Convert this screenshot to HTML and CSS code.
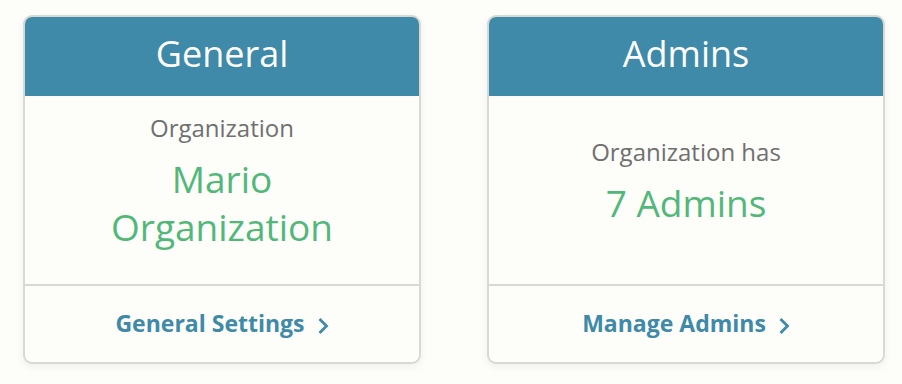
FILE: index.html
```html
<!DOCTYPE html>
<html lang="en">
<head>
    <meta charset="UTF-8">
    <meta name="viewport" content="width=device-width, initial-scale=1.0">
    <title>Organization</title>
    <link rel="stylesheet" href="styles.css">
</head>
<body>
    <div class="cards">
        <div class="card">
            <div class="card-header">General</div>
            <div class="card-body">
                <p class="label">Organization</p>
                <p class="value">Mario<br>Organization</p>
            </div>
            <a class="card-footer" href="#">
                General Settings
                <svg class="chevron" width="12" height="18" viewBox="0 0 12 18"><path d="M2.5 2 L9.5 9 L2.5 16" fill="none" stroke="currentColor" stroke-width="2.8"/></svg>
            </a>
        </div><!-- card -->
        <div class="card">
            <div class="card-header">Admins</div>
            <div class="card-body">
                <p class="label">Organization has</p>
                <p class="value">7 Admins</p>
            </div>
            <a class="card-footer" href="#">
                Manage Admins
                <svg class="chevron" width="12" height="18" viewBox="0 0 12 18"><path d="M2.5 2 L9.5 9 L2.5 16" fill="none" stroke="currentColor" stroke-width="2.8"/></svg>
            </a>
        </div><!-- card -->
    </div>
</body>
</html>
```

FILE: styles.css
```css
* {
    box-sizing: border-box;
}
body {
    margin: 0;
    background: #fdfdf9;
    font-family: "Open Sans", "Noto Sans", sans-serif;
}
.cards {
    display: flex;
    gap: 66px;
    padding: 15px 23px;
}
.card {
    width: 398px;
    height: 349px;
    flex-shrink: 0;
    display: flex;
    flex-direction: column;
    border: 2px solid #d8d8d6;
    border-radius: 9px;
    background: #fdfdf9;
    box-shadow: 0 3px 8px rgba(0, 0, 0, 0.06);
    overflow: hidden;
}
.card-header {
    height: 79px;
    flex-shrink: 0;
    background: #3e8aa8;
    color: #fff;
    font-size: 36px;
    display: flex;
    align-items: center;
    justify-content: center;
    padding-bottom: 7px;
}
.card-body {
    flex: 1;
    display: flex;
    flex-direction: column;
    align-items: center;
    justify-content: center;
    text-align: center;
    border-bottom: 2px solid #d8d8d6;
    padding-bottom: 16px;
}
.label {
    margin: 0;
    color: #707070;
    font-size: 24px;
    line-height: 30px;
}
.value {
    margin: 12px 0 0;
    color: #52b87a;
    font-size: 37px;
    line-height: 48px;
}
.card-footer {
    height: 76px;
    flex-shrink: 0;
    display: flex;
    align-items: center;
    justify-content: center;
    gap: 12px;
    color: #3e8aa8;
    font-size: 23px;
    font-weight: 700;
    text-decoration: none;
    padding-bottom: 2px;
}
.chevron {
    margin-top: 5px;
}
```
